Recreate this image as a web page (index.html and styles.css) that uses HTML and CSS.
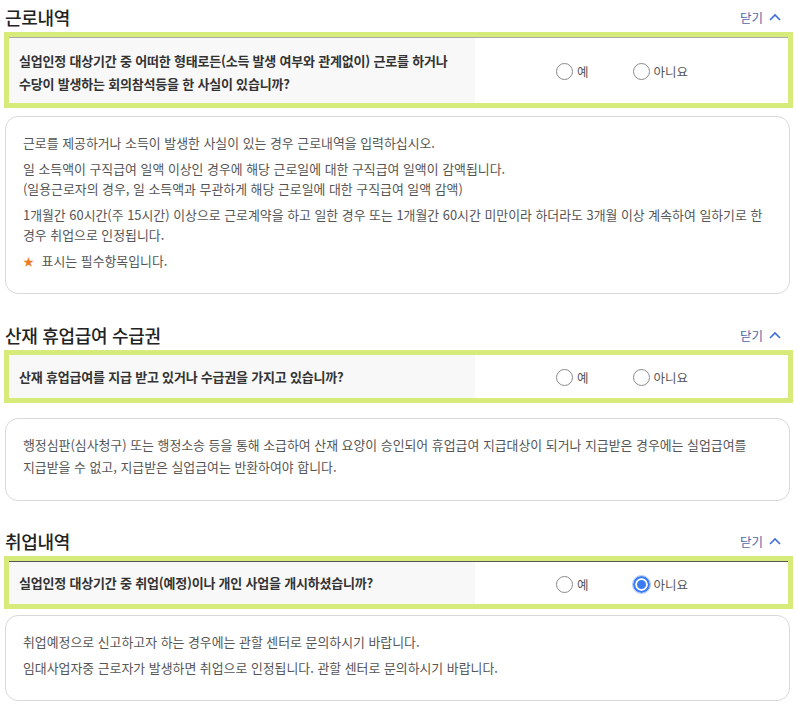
FILE: index.html
```html
<!DOCTYPE html>
<html lang="ko">
<head>
<meta charset="utf-8">
<link rel="stylesheet" href="styles.css">
</head>
<body>
<div class="page">
  <section class="sec sec-first">
    <div class="sec-head">
      <h2 class="sec-title">근로내역</h2>
      <button class="toggle">닫기 <svg class="chev" viewBox="0 0 12 8" width="12" height="8"><path d="M1 7 L6 2 L11 7" fill="none" stroke="#3b6fd6" stroke-width="1.6"/></svg></button>
    </div>
    <div class="qbox">
      <div class="qrow line-gray">
        <div class="qtext qtext-tall">실업인정 대상기간 중 어떠한 형태로든(소득 발생 여부와 관계없이) 근로를 하거나<br>수당이 발생하는 회의참석등을 한 사실이 있습니까?</div>
        <div class="qopts">
          <label class="opt"><span class="radio"></span>예</label>
          <label class="opt"><span class="radio"></span>아니요</label>
        </div>
      </div>
    </div>
    <div class="info info-1">
      <p>근로를 제공하거나 소득이 발생한 사실이 있는 경우 근로내역을 입력하십시오.</p>
      <p>일 소득액이 구직급여 일액 이상인 경우에 해당 근로일에 대한 구직급여 일액이 감액됩니다.<br>(일용근로자의 경우, 일 소득액과 무관하게 해당 근로일에 대한 구직급여 일액 감액)</p>
      <p>1개월간 60시간(주 15시간) 이상으로 근로계약을 하고 일한 경우 또는 1개월간 60시간 미만이라 하더라도 3개월 이상 계속하여 일하기로 한<br>경우 취업으로 인정됩니다.</p>
      <p><span class="star">★</span> 표시는 필수항목입니다.</p>
    </div>
  </section>

  <section class="sec">
    <div class="sec-head">
      <h2 class="sec-title">산재 휴업급여 수급권</h2>
      <button class="toggle">닫기 <svg class="chev" viewBox="0 0 12 8" width="12" height="8"><path d="M1 7 L6 2 L11 7" fill="none" stroke="#3b6fd6" stroke-width="1.6"/></svg></button>
    </div>
    <div class="qbox">
      <div class="qrow">
        <div class="qtext">산재 휴업급여를 지급 받고 있거나 수급권을 가지고 있습니까?</div>
        <div class="qopts">
          <label class="opt"><span class="radio"></span>예</label>
          <label class="opt"><span class="radio"></span>아니요</label>
        </div>
      </div>
    </div>
    <div class="info info-2">
      <p>행정심판(심사청구) 또는 행정소송 등을 통해 소급하여 산재 요양이 승인되어 휴업급여 지급대상이 되거나 지급받은 경우에는 실업급여를<br>지급받을 수 없고, 지급받은 실업급여는 반환하여야 합니다.</p>
    </div>
  </section>

  <section class="sec sec-last">
    <div class="sec-head">
      <h2 class="sec-title">취업내역</h2>
      <button class="toggle">닫기 <svg class="chev" viewBox="0 0 12 8" width="12" height="8"><path d="M1 7 L6 2 L11 7" fill="none" stroke="#3b6fd6" stroke-width="1.6"/></svg></button>
    </div>
    <div class="qbox">
      <div class="qrow line-dark">
        <div class="qtext qtext-lined">실업인정 대상기간 중 취업(예정)이나 개인 사업을 개시하셨습니까?</div>
        <div class="qopts">
          <label class="opt"><span class="radio"></span>예</label>
          <label class="opt"><span class="radio checked"></span>아니요</label>
        </div>
      </div>
    </div>
    <div class="info info-3">
      <p>취업예정으로 신고하고자 하는 경우에는 관할 센터로 문의하시기 바랍니다.</p>
      <p>임대사업자중 근로자가 발생하면 취업으로 인정됩니다. 관할 센터로 문의하시기 바랍니다.</p>
    </div>
  </section>
</div>
</body>
</html>
```
FILE: styles.css
```css
* { box-sizing: border-box; }
html, body { margin: 0; padding: 0; background: #fff; }
body {
  font-family: "Noto Sans CJK KR", "Noto Sans", sans-serif;
  color: #333;
}
.page { padding: 0 4px; }
.sec { margin-top: 24px; }
.sec-first { margin-top: 0; }
.sec-last { margin-top: 23px; }
.sec-head {
  height: 32px;
  display: flex;
  align-items: center;
  justify-content: space-between;
  padding-top: 2px;
}
.sec-title {
  margin: 0;
  padding-left: 1px;
  font-size: 18px;
  font-weight: 500;
  color: #222;
  letter-spacing: -0.3px;
}
.toggle {
  border: 0;
  background: none;
  padding: 0 12px 0 0;
  font-family: inherit;
  font-size: 12.5px;
  color: #4d6aa8;
  display: flex;
  align-items: center;
  gap: 6px;
}
.chev { display: block; }
.qbox {
  border: 5px solid #d6eb79;
  width: 789px;
}
.qrow {
  display: flex;
  background: #fff;
}
.line-gray { border-top: 1px solid #aaa; }
.line-dark { border-top: 1px solid #555; }
.qtext {
  width: 466px;
  background: #f8f8f8;
  padding: 11px 10px;
  font-size: 13px;
  font-weight: 700;
  color: #333;
  line-height: 21px;
  letter-spacing: -0.2px;
}
.qtext-tall { padding: 11px 10px 8px; line-height: 23px; }
.qtext-lined { padding: 10px 10px 11px; }
.qopts {
  flex: 1;
  display: flex;
  align-items: center;
  justify-content: center;
  gap: 44px;
  padding-right: 19px;
  padding-top: 2px;
}
.opt {
  display: flex;
  align-items: center;
  gap: 4px;
  font-size: 12.5px;
  color: #555;
}
.radio {
  width: 17px;
  height: 17px;
  border: 1px solid #8a8a8a;
  border-radius: 50%;
  display: inline-block;
  background: #fff;
}
.radio.checked {
  border: 2px solid #3b7cf6;
  box-shadow: inset 0 0 0 2px #fff;
  background: #3b7cf6;
  outline: 1px solid #a9c6fb;
}
.info {
  margin-top: 8px;
  margin-left: 1px;
  width: 785px;
  border: 1px solid #d9d9d9;
  border-radius: 13px;
  padding: 16px 17px 22px;
  font-size: 12.9px;
  color: #555;
  line-height: 20.5px;
}
.info-2 { margin-top: 15px; padding-top: 15px; line-height: 22px; }
.info-3 { margin-top: 6px; }
.info p { margin: 0 0 5px; }
.info p:last-child { margin-bottom: 0; }
.star { color: #f07a1f; font-size: 11px; margin-right: 4px; }
```
